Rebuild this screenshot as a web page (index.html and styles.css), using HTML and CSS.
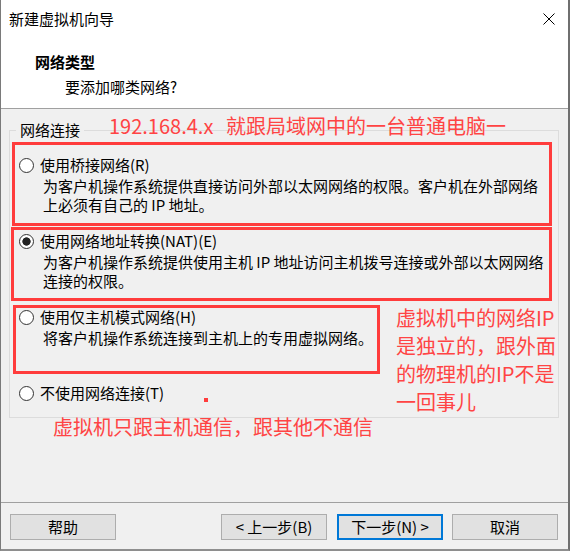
FILE: index.html
```html
<!DOCTYPE html>
<html lang="zh-CN">
<head>
<meta charset="utf-8">
<title>新建虚拟机向导</title>
<link rel="stylesheet" href="styles.css">
</head>
<body>
<div class="window">
  <div class="titlebar">
    <span class="title">新建虚拟机向导</span>
    <svg class="close" width="12" height="12" viewBox="0 0 12 12"><path d="M0.5 0.5L11.5 11.5M11.5 0.5L0.5 11.5" stroke="#000" stroke-width="1" fill="none"/></svg>
  </div>
  <div class="header">
    <div class="h-title">网络类型</div>
    <div class="h-sub">要添加哪类网络?</div>
  </div>
  <div class="content">
    <fieldset class="group">
      <legend>网络连接</legend>
      <div class="options">
        <div class="option">
          <div class="opt-label"><span class="radio"></span>使用桥接网络(R)</div>
          <div class="opt-desc">为客户机操作系统提供直接访问外部以太网网络的权限。客户机在外部网络<br>上必须有自己的 IP 地址。</div>
        </div>
        <div class="option">
          <div class="opt-label"><span class="radio checked"></span>使用网络地址转换(NAT)(E)</div>
          <div class="opt-desc">为客户机操作系统提供使用主机 IP 地址访问主机拨号连接或外部以太网网络<br>连接的权限。</div>
        </div>
        <div class="option">
          <div class="opt-label"><span class="radio"></span>使用仅主机模式网络(H)</div>
          <div class="opt-desc">将客户机操作系统连接到主机上的专用虚拟网络。</div>
        </div>
        <div class="option last">
          <div class="opt-label"><span class="radio"></span>不使用网络连接(T)</div>
        </div>
      </div>
    </fieldset>
  </div>
  <div class="footer">
    <button class="btn">帮助</button>
    <span class="spacer"></span>
    <button class="btn">&lt; 上一步(B)</button>
    <button class="btn btn-default">下一步(N) &gt;</button>
    <button class="btn btn-cancel">取消</button>
  </div>

  <div class="anno-box box1"></div>
  <div class="anno-box box2"></div>
  <div class="anno-box box3"></div>
  <div class="anno-text anno-top"><span class="ip">192.168.4.x</span>就跟局域网中的一台普通电脑一</div>
  <div class="anno-text anno-right">虚拟机中的网络IP<br>是独立的，跟外面<br>的物理机的IP不是<br>一回事儿</div>
  <div class="anno-text anno-bottom">虚拟机只跟主机通信，跟其他不通信</div>
  <div class="anno-dot"></div>
</div>
</body>
</html>
```

FILE: styles.css
```css
* { box-sizing: border-box; }
html, body { margin: 0; padding: 0; }
body {
  font-family: "Noto Sans CJK SC", "Noto Sans", sans-serif;
  font-size: 15px;
  color: #000;
  background: #fff;
}
.window {
  position: relative;
  width: 570px;
  height: 551px;
  border-left: 1px solid #7a7a7a;
  border-right: 2px solid #6f6f6f;
  border-bottom: 2px solid #8e8e8e;
  display: flex;
  flex-direction: column;
  background: #f0f0f0;
  overflow: hidden;
}
.titlebar {
  height: 38px;
  flex: none;
  background: #fff;
  display: flex;
  align-items: center;
  justify-content: space-between;
  padding: 0 13px 0 8px;
}
.title { font-size: 15px; line-height: 20px; }
.close { display: block; }
.header {
  height: 71px;
  flex: none;
  background: #fff;
  border-bottom: 1px solid #a0a0a0;
  padding: 15px 0 0 34px;
}
.h-title { font-weight: bold; line-height: 18px; }
.h-sub { line-height: 18px; margin-top: 7px; padding-left: 30px; }

.content { flex: 1; padding-top: 12px; }
.group {
  margin: 0 9px 0 8px;
  padding: 15px 0 0 0;
  border: 1px solid #dcdcdc;
  min-width: 0;
  height: 297px;
}
.group legend {
  margin-left: 6px;
  padding: 0 4px;
  line-height: 18px;
  font-size: 15px;
}
.options { display: flex; flex-direction: column; }
.option { height: 76px; }
.option.last { height: auto; }
.opt-label {
  display: flex;
  align-items: center;
  height: 21px;
  line-height: 21px;
  white-space: nowrap;
}
.radio {
  flex: none;
  width: 15px;
  height: 15px;
  margin: 1px 6px 0 9px;
  border: 1px solid #333;
  border-radius: 50%;
  background: #fff;
}
.radio.checked {
  background: radial-gradient(circle, #222 0 3.8px, #fff 4.5px);
}
.opt-desc {
  padding-left: 33px;
  margin-top: 1px;
  line-height: 19px;
  white-space: nowrap;
}

.footer {
  flex: none;
  height: 47px;
  border-top: 1px solid #a0a0a0;
  padding: 11px 10px 0 9px;
  display: flex;
  align-items: flex-start;
  gap: 10px;
}
.spacer { flex: 1; }
.btn {
  width: 106px;
  height: 26px;
  padding: 0;
  border: 1px solid #adadad;
  background: #e1e1e1;
  font-family: inherit;
  font-size: 15px;
  line-height: 22px;
  color: #000;
}
.btn-default { border: 2px solid #0078d7; }
.btn-cancel { margin-left: -1px; }

.anno-box {
  position: absolute;
  border: 3px solid #ff3c3c;
}
.box1 { left: 11px; top: 142px; width: 540px; height: 84px; }
.box2 { left: 10px; top: 227px; width: 541px; height: 74px; }
.box3 { left: 12px; top: 305px; width: 367px; height: 69px; }
.anno-text {
  position: absolute;
  color: #ff4444;
  font-size: 20px;
  line-height: 28px;
  white-space: nowrap;
}
.anno-top { left: 108px; top: 112px; }
.anno-top .ip { display: inline-block; width: 117px; }
.anno-right { left: 395px; top: 304px; }
.anno-bottom { left: 52px; top: 413px; }
.anno-dot {
  position: absolute;
  left: 203px;
  top: 398px;
  width: 4px;
  height: 4px;
  background: #ff3c3c;
}
```
